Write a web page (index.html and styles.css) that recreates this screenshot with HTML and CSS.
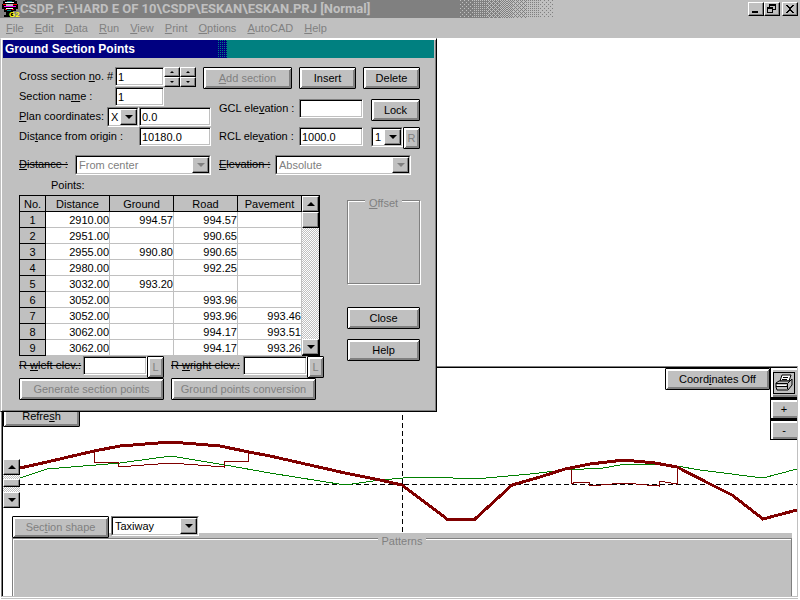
FILE: index.html
```html
<!DOCTYPE html>
<html lang="en">
<head>
    <meta charset="UTF-8">
    <meta name="viewport" content="width=device-width, initial-scale=1.0">
    <title>CSDP - Ground Section Points</title>
    <link rel="stylesheet" href="styles.css">
</head>
<body>

<!-- Title bar -->
<header class="titlebar">
    <svg class="app-icon" width="20" height="18" viewBox="0 0 20 18" shape-rendering="crispEdges" aria-hidden="true">
        <path d="M5 0h10v1h2v3h1v5h-2v2h-3v5h-3v1H4v-2h2v-3H4V9H2V4h1V1h2z" fill="#000"/>
        <path d="M5 2h9v1H5z" fill="#fff"/>
        <path d="M7 1h5v1H7z" fill="#008080"/>
        <path d="M3 4h3v1H3zM13 4h4v1h-4z" fill="#f00"/>
        <path d="M6 4h7v2H6z" fill="#c0c0c0"/>
        <path d="M4 6h12v1H4z" fill="#f0f"/>
        <path d="M6 8h7v1H6z" fill="#fff"/>
        <path d="M5 9h2v1H5zM12 9h2v1h-2z" fill="#f00"/>
        <path d="M7 10h4v1H7z" fill="#008080"/>
        <text x="9" y="17" class="icon-text">G2</text>
    </svg>
    <h1>CSDP, F:\HARD E OF 10\CSDP\ESKAN\ESKAN.PRJ [Normal]</h1>
    <!-- Dithered fade from dark to light gray -->
    <svg class="fade" width="93" height="18" viewBox="0 0 93 18" shape-rendering="crispEdges" aria-hidden="true">
        <defs>
            <pattern id="sparse" width="4" height="4" patternUnits="userSpaceOnUse"><path d="M0 0h1v1H0zM2 2h1v1H2z"/></pattern>
            <pattern id="quarter" width="2" height="2" patternUnits="userSpaceOnUse"><path d="M0 0h1v1H0z"/></pattern>
            <pattern id="third" width="4" height="4" patternUnits="userSpaceOnUse"><path d="M0 0h1v1H0zM2 0h1v1H2zM0 2h1v1H0zM2 2h1v1H2zM1 1h1v1H1zM3 3h1v1H3z"/></pattern>
            <pattern id="half" width="2" height="2" patternUnits="userSpaceOnUse"><path d="M0 0h1v1H0zM1 1h1v1H1z"/></pattern>
        </defs>
        <rect class="dark" width="47" height="18"/>
        <rect width="14" height="18" fill="url(#sparse)"/>
        <rect x="14" width="13" height="18" fill="url(#quarter)"/>
        <rect x="27" width="13" height="18" fill="url(#third)"/>
        <rect x="40" width="7" height="18" fill="url(#half)"/>
        <rect x="47" width="6" height="18" fill="url(#half-dark)"/>
        <rect x="53" width="13" height="18" fill="url(#third-dark)"/>
        <rect x="66" width="13" height="18" fill="url(#quarter-dark)"/>
        <rect x="79" width="14" height="18" fill="url(#sparse-dark)"/>
        <defs class="dark">
            <pattern id="sparse-dark" width="4" height="4" patternUnits="userSpaceOnUse"><path d="M0 0h1v1H0zM2 2h1v1H2z"/></pattern>
            <pattern id="quarter-dark" width="2" height="2" patternUnits="userSpaceOnUse"><path d="M0 0h1v1H0z"/></pattern>
            <pattern id="third-dark" width="4" height="4" patternUnits="userSpaceOnUse"><path d="M0 0h1v1H0zM2 0h1v1H2zM0 2h1v1H0zM2 2h1v1H2zM1 1h1v1H1zM3 3h1v1H3z"/></pattern>
            <pattern id="half-dark" width="2" height="2" patternUnits="userSpaceOnUse"><path d="M0 0h1v1H0zM1 1h1v1H1z"/></pattern>
        </defs>
    </svg>
    <div class="window-buttons">
        <button class="win-btn" aria-label="Minimize"><svg width="14" height="12" viewBox="0 0 14 12"><path d="M3 8h6v2H3z"/></svg></button>
        <button class="win-btn" aria-label="Restore"><svg width="14" height="12" viewBox="0 0 14 12" shape-rendering="crispEdges"><path d="M4 1h7v6H8V6h2V3H5v1H4zM2 4h6v6H2zM3 6v3h4V6z" fill-rule="evenodd"/></svg></button>
        <button class="win-btn close" aria-label="Close"><svg width="14" height="12" viewBox="0 0 14 12" shape-rendering="crispEdges"><path d="M3 2h2v1h1v1h2V3h1V2h2v1h-1v1H9v1H8v2h1v1h1v1h1v1H9V9H8V8H6v1H5v1H3V9h1V8h1V7h1V5H5V4H4V3H3z"/></svg></button>
    </div>
</header>

<!-- Menu -->
<nav class="menubar">
    <a href="#"><u>F</u>ile</a>
    <a href="#"><u>E</u>dit</a>
    <a href="#"><u>D</u>ata</a>
    <a href="#"><u>R</u>un</a>
    <a href="#"><u>V</u>iew</a>
    <a href="#"><u>P</u>rint</a>
    <a href="#"><u>O</u>ptions</a>
    <a href="#"><u>A</u>utoCAD</a>
    <a href="#"><u>H</u>elp</a>
</nav>

<main class="workspace">

    <!-- Section drawing window -->
    <section class="section-view">
        <svg class="drawing" viewBox="3 368 794 228" preserveAspectRatio="none" shape-rendering="crispEdges" aria-hidden="true">
            <path class="axis" d="M20 484.500H797M402.500 415V532"/>
            <polyline class="ground" points="20,478 47,469 120,463 171,456 225,465 270,473 345,485 380,480 415,477 430,477 475,479 530,474 565,470 603,468 620,465 660,464 677,466 700,470 763,478 797,469"/>
            <polyline class="pavement" points="94,451 94,462 118,462 118,467 171,463 224,467 224,461 248,461 248,451"/>
            <polyline class="pavement" points="571,468 571,484 576,482 589,482 589,486 624,483 659,486 659,481 677,484 677,467"/>
            <polyline class="road" points="20,468 47,462 94,451 120,446 171,442 220,446 249,452 270,456 345,473 380,480 402,485 447,519 475,519 512,485 540,477 565,469 590,464 624,460 655,463 677,467 710,484 732,495 763,519 797,510"/>
        </svg>
        <div class="view-top">
            <button class="btn refresh">Refre<u>s</u>h</button>
            <button class="btn coords">Coord<u>i</u>nates Off</button>
            <div class="tools">
                <button class="tool print" aria-label="Print">
                    <svg width="20" height="20" viewBox="0 0 20 20" aria-hidden="true">
                        <path d="M6 8L8 2h9l-2 6z" fill="#fff" stroke="#000"/>
                        <path d="M9 4.500h5M8 6.500h5" stroke="#000"/>
                        <path d="M2 10l3-2h11l2-2v6l-4 5H3l-1-3z" fill="#c0c0c0" stroke="#000"/>
                        <path d="M2 10.500h11.500V16M13.500 10.500L18 6M2 13.500h11" fill="none" stroke="#000"/>
                        <path d="M3 12.500h9" stroke="#fff"/>
                    </svg>
                </button>
                <button class="tool">+</button>
                <button class="tool">-</button>
            </div>
        </div>
        <div class="scrollbar view-scroll">
            <button class="scroll-btn up" aria-label="Scroll up"></button>
            <div class="track"><div class="thumb"></div></div>
            <button class="scroll-btn down" aria-label="Scroll down"></button>
        </div>
        <div class="shape-row">
            <button class="btn" disabled>Sec<u>t</u>ion shape</button>
            <span class="select"><select aria-label="Section shape"><option>Taxiway</option></select></span>
        </div>
        <div class="patterns-panel">
            <fieldset class="group patterns" disabled><legend>Patterns</legend></fieldset>
        </div>
    </section>

    <!-- Ground Section Points dialog -->
    <form class="dialog" onsubmit="return false">
        <h2>Ground Section Points</h2>
        <div class="dialog-body">
            <div class="row cross-row">
                <label class="wide" for="cross-no">Cross section <u>n</u>o. #</label>
                <input class="small" id="cross-no" type="text" value="1">
                <div class="spinner"><button aria-label="Next" class="up"></button><button aria-label="Previous" class="down"></button></div>
                <div class="spinner"><button aria-label="Next section" class="up"></button><button aria-label="Previous section" class="down"></button></div>
                <div class="actions">
                    <button class="btn add" disabled><u>A</u>dd section</button>
                    <button class="btn">Insert</button>
                    <button class="btn">Delete</button>
                </div>
            </div>

            <div class="fields">
                <div class="fields-left">
                    <div class="row">
                        <label class="wide" for="name">Section na<u>m</u>e :</label>
                        <input class="small" id="name" type="text" value="1">
                    </div>
                    <div class="row">
                        <label class="plan" for="plan"><u>P</u>lan coordinates:</label>
                        <span class="select axis-select"><select aria-label="Axis"><option>X</option><option>Y</option></select></span>
                        <input class="medium" id="plan" type="text" value="0.0">
                    </div>
                    <div class="row">
                        <label class="origin" for="origin">Dis<u>t</u>ance from origin :</label>
                        <input class="medium" id="origin" type="text" value="10180.0">
                    </div>
                </div>
                <div class="fields-right">
                    <div class="row">
                        <label class="elev" for="gcl">GCL ele<u>v</u>ation :</label>
                        <input class="value" id="gcl" type="text">
                        <button class="btn lock">Lock</button>
                    </div>
                    <div class="row">
                        <label class="elev" for="rcl">RCL ele<u>v</u>ation :</label>
                        <input class="value" id="rcl" type="text" value="1000.0">
                        <span class="select num-select"><select aria-label="RCL number"><option>1</option></select></span>
                        <button class="btn mini" disabled>R</button>
                    </div>
                </div>
            </div>

            <div class="row">
                <label class="mode" for="distance"><s><u>D</u>istance :</s></label>
                <span class="select mode-select"><select id="distance" disabled><option>From center</option></select></span>
                <label class="mode" for="elevation"><s><u>E</u>levation :</s></label>
                <span class="select mode-select"><select id="elevation" disabled><option>Absolute</option></select></span>
            </div>

            <div class="points-label">Points:</div>
            <div class="points-area">
                <table class="points">
                    <thead>
                        <tr><th class="no">No.</th><th>Distance</th><th>Ground</th><th>Road</th><th>Pavement</th></tr>
                    </thead>
                    <tbody>
                        <tr><th>1</th><td>2910.00</td><td>994.57</td><td>994.57</td><td></td></tr>
                        <tr><th>2</th><td>2951.00</td><td></td><td>990.65</td><td></td></tr>
                        <tr><th>3</th><td>2955.00</td><td>990.80</td><td>990.65</td><td></td></tr>
                        <tr><th>4</th><td>2980.00</td><td></td><td>992.25</td><td></td></tr>
                        <tr><th>5</th><td>3032.00</td><td>993.20</td><td></td><td></td></tr>
                        <tr><th>6</th><td>3052.00</td><td></td><td>993.96</td><td></td></tr>
                        <tr><th>7</th><td>3052.00</td><td></td><td>993.96</td><td>993.46</td></tr>
                        <tr><th>8</th><td>3062.00</td><td></td><td>994.17</td><td>993.51</td></tr>
                        <tr><th>9</th><td>3062.00</td><td></td><td>994.17</td><td>993.26</td></tr>
                    </tbody>
                </table>
                <div class="scrollbar">
                    <button class="scroll-btn up" aria-label="Scroll up"></button>
                    <div class="track"><div class="thumb"></div></div>
                    <button class="scroll-btn down" aria-label="Scroll down"></button>
                </div>
                <div class="side">
                    <fieldset class="group offset" disabled><legend><u>O</u>ffset</legend></fieldset>
                    <button class="btn">Close</button>
                    <button class="btn">Help</button>
                </div>
            </div>

            <div class="row">
                <label class="left-wall" for="wleft"><s>R <u>w</u>left elev.:</s></label>
                <input class="value" id="wleft" type="text">
                <button class="btn mini" disabled>L</button>
                <label class="right-wall" for="wright"><s>R <u>w</u>right elev.:</s></label>
                <input class="value" id="wright" type="text">
                <button class="btn mini" disabled>L</button>
            </div>
            <div class="row bottom">
                <button class="btn" disabled>Generate section points</button>
                <button class="btn" disabled>Ground points conversion</button>
            </div>
        </div>
    </form>
</main>

</body>
</html>
```

FILE: styles.css
```css
/* Global */
* {
    box-sizing: border-box;
}

body {
    margin: 0;
    display: flex;
    flex-direction: column;
    min-height: 100vh;
    background-color: #ffffff;
    color: #000000;
    font-family: 'Liberation Sans', Arial, sans-serif;
    font-size: 11px;
    line-height: 16px;
}

button, input, select {
    margin: 0;
    font: inherit;
    color: inherit;
    border-radius: 0;
}

/* Title bar */
.titlebar {
    display: flex;
    align-items: center;
    height: 18px;
    background-color: #c0c0c0;
}

.app-icon {
    flex: none;
    background-color: #808080;
}

.icon-text {
    font: bold 8px 'Liberation Sans', sans-serif;
    fill: #ffff00;
}

.titlebar h1 {
    flex: none;
    margin: 0;
    width: 440px;
    font-family: Roboto, 'Liberation Sans', sans-serif;
    font-size: 13px;
    line-height: 18px;
    white-space: nowrap;
    color: #c0c0c0;
    background-color: #808080;
}

.fade {
    flex: none;
}

.fade .dark {
    fill: #808080;
}

.fade pattern {
    fill: #c0c0c0;
}

.fade .dark pattern {
    fill: #808080;
}

.window-buttons {
    display: flex;
    margin-left: auto;
    padding-right: 2px;
}

.win-btn {
    display: flex;
    width: 16px;
    height: 14px;
    padding: 0;
    border: 1px solid;
    border-color: #ffffff #000000 #000000 #ffffff;
    background-color: #c0c0c0;
    box-shadow: inset -1px -1px #808080;
}

.win-btn.close {
    margin-left: 2px;
}

/* Menu */
.menubar {
    display: flex;
    gap: 11px;
    height: 20px;
    padding: 2px 6px;
    background-color: #c0c0c0;
}

.menubar a {
    color: #808080;
    text-decoration: none;
}

.workspace {
    position: relative;
    flex: 1;
    display: flex;
    flex-direction: column;
    justify-content: flex-end;
}

/* Buttons */
.btn {
    height: 22px;
    padding: 0 4px;
    border: 1px solid #000000;
    border-radius: 1px;
    background-color: #c0c0c0;
    box-shadow: inset 1px 1px #ffffff, inset -1px -1px #808080, inset 2px 2px #ffffff, inset -2px -2px #808080;
    white-space: nowrap;
}

.btn:disabled {
    color: #808080;
}

.btn.mini {
    width: 17px;
    padding: 0;
}

/* Text boxes */
input {
    height: 19px;
    padding: 0 2px;
    border: 1px solid;
    border-color: #808080 #ffffff #ffffff #808080;
    background-color: #ffffff;
    box-shadow: inset 1px 1px #000000, inset -1px -1px #c0c0c0;
}

/* Drop-downs */
.select {
    position: relative;
    display: inline-flex;
    height: 20px;
    border: 1px solid;
    border-color: #808080 #ffffff #ffffff #808080;
    background-color: #ffffff;
}

.select select {
    width: 100%;
    padding: 0 16px 0 2px;
    border: 1px solid;
    border-color: #000000 #c0c0c0 #c0c0c0 #000000;
    appearance: none;
    background-color: #ffffff;
    opacity: 1;
}

.select select:disabled {
    color: #808080;
}

.select::before {
    content: '';
    position: absolute;
    top: 1px;
    right: 1px;
    bottom: 1px;
    width: 15px;
    border: 1px solid;
    border-color: #ffffff #000000 #000000 #ffffff;
    box-shadow: inset -1px -1px #808080;
    background-color: #c0c0c0;
    pointer-events: none;
}

.select::after {
    content: '';
    position: absolute;
    top: 7px;
    right: 5px;
    border: 4px solid transparent;
    border-top-color: #000000;
    border-bottom: 0;
    pointer-events: none;
}

.select:has(select:disabled)::after {
    border-top-color: #808080;
}

/* Scroll bars */
.scrollbar {
    display: flex;
    flex-direction: column;
    width: 18px;
}

.scroll-btn, .thumb {
    flex: none;
    width: 100%;
    height: 16px;
    padding: 0;
    border: 1px solid;
    border-color: #ffffff #000000 #000000 #ffffff;
    background-color: #c0c0c0;
    box-shadow: inset -1px -1px #808080;
}

.scroll-btn::before, .spinner button::before {
    content: '';
    display: block;
    width: 0;
    margin: 0 auto;
    border: 4px solid transparent;
}

.scroll-btn.up::before, .spinner .up::before {
    border-top: 0;
    border-bottom-color: #000000;
}

.scroll-btn.down::before, .spinner .down::before {
    border-bottom: 0;
    border-top-color: #000000;
}

.track {
    flex: 1;
    background-image: conic-gradient(#c0c0c0 25%, #ffffff 0 50%, #c0c0c0 0 75%, #ffffff 0);
    background-size: 2px 2px;
}

/* Group boxes */
.group {
    margin: 0;
    padding: 0;
    border: 1px solid #808080;
    box-shadow: 1px 1px #ffffff, inset 1px 1px #ffffff;
    color: #808080;
    text-align: center;
}

/* The caption hangs below the frame line */
.group legend {
    height: 3px;
    margin: 0 auto;
    padding: 0 4px;
    line-height: 9px;
    background-color: #c0c0c0;
}

/* Section drawing window */
.section-view {
    position: relative;
    display: flex;
    flex-direction: column;
    margin: 0 2px 3px 1px;
    border: 1px solid #808080;
    border-right-color: #c0c0c0;
    border-bottom-color: #c0c0c0;
    box-shadow: inset 1px 1px #000000, 0 1px #ffffff, 0 2px #c0c0c0;
    padding: 1px 0 0 1px;
}

.drawing {
    position: absolute;
    top: 1px;
    left: 1px;
    width: calc(100% - 1px);
    height: calc(100% - 1px);
}

.drawing path, .drawing polyline {
    fill: none;
}

.drawing .axis {
    stroke: #000000;
    stroke-dasharray: 5 3;
}

.drawing .ground {
    stroke: #008000;
}

.drawing .pavement {
    stroke: #800000;
}

.drawing .road {
    stroke: #800000;
    stroke-width: 3;
}

.view-top {
    position: relative;
    display: flex;
    height: 72px;
}

.refresh {
    width: 77px;
    margin-top: 37px;
}

.coords {
    width: 105px;
    margin-left: auto;
}

.tools {
    display: flex;
    flex-direction: column;
    width: 27px;
}

.tool {
    height: 21px;
    padding: 0;
    border: 1px solid #000000;
    border-width: 2px 0 1px 1px;
    background-color: #c0c0c0;
    box-shadow: inset 2px 2px #ffffff, inset 0 -2px #808080;
}

.tool.print {
    display: flex;
    align-items: center;
    justify-content: center;
    height: 30px;
    border-top-width: 0;
}

.print svg {
    outline: 1px solid #000000;
}

.view-scroll {
    position: relative;
    width: 17px;
    height: 49px;
    margin: 19px 0 8px;
}

.view-scroll .thumb {
    height: 8px;
    margin-top: 4px;
}

.shape-row {
    position: relative;
    display: flex;
    gap: 2px;
    margin-left: 9px;
    z-index: 1;
}

.shape-row .btn {
    width: 97px;
}

.shape-row .select {
    width: 88px;
}

.patterns-panel {
    position: relative;
    margin: -5px 5px 0 9px;
    padding-top: 4px;
    background-color: #c0c0c0;
}

.patterns {
    height: 59px;
    border-bottom: 0;
    box-shadow: inset 1px 1px #ffffff;
}

/* Dialog over the main window */
.dialog {
    position: absolute;
    top: 0;
    left: 0;
    padding: 1px;
    border: 1px solid;
    border-color: #ffffff #000000 #000000 #c0c0c0;
    box-shadow: inset 1px 1px #ffffff, inset -1px -1px #808080;
    background-color: #c0c0c0;
}

.dialog h2 {
    margin: 0 1px;
    padding-left: 2px;
    font-size: 12px;
    line-height: 18px;
    color: #ffffff;
    background-image:
        linear-gradient(to right, #000080 214px, transparent 214px 224px, #008080 224px),
        conic-gradient(#008080 25%, #000080 0);
    background-size: auto, 2px 2px;
}

.dialog-body {
    padding: 9px 15px 10px 17px;
}

.row {
    display: flex;
    align-items: flex-start;
}

.row label {
    flex: none;
    padding-top: 1px;
    white-space: nowrap;
}

.cross-row {
    height: 20px;
}

.wide {
    width: 96px;
}

.plan {
    width: 88px;
}

.origin {
    width: 120px;
}

.elev {
    width: 80px;
}

.small {
    width: 49px;
}

.medium {
    width: 72px;
}

.value {
    width: 64px;
}

.spinner {
    display: flex;
    flex-direction: column;
    width: 16px;
}

.spinner button {
    height: 10px;
    padding: 0;
    border: 1px solid;
    border-color: #ffffff #000000 #000000 #ffffff;
    background-color: #c0c0c0;
    box-shadow: inset -1px -1px #808080;
}

.spinner button::before {
    border-width: 2px;
}

.actions {
    display: flex;
    gap: 7px;
    margin-left: 7px;
}

.actions .btn {
    width: 57px;
}

.actions .add {
    width: 89px;
}

.fields {
    display: flex;
    gap: 8px;
}

.fields-left {
    width: 192px;
}

.fields-left .row {
    height: 20px;
}

.fields-right {
    padding-top: 12px;
}

.fields-right .row {
    height: 28px;
}

.axis-select, .num-select {
    width: 32px;
}

.num-select {
    margin-left: 8px;
}

.lock {
    width: 49px;
    margin-left: 8px;
}

.mode {
    width: 56px;
}

.mode-select {
    width: 136px;
    margin-right: 8px;
}

.points-label {
    padding: 2px 32px;
}

.points-area {
    display: flex;
    align-items: flex-start;
}

.points {
    width: 283px;
    table-layout: fixed;
    border-collapse: collapse;
    border: 1px solid #000000;
    background-color: #ffffff;
}

.points th {
    height: 16px;
    padding: 0;
    border: 1px solid #000000;
    font-weight: normal;
    line-height: 14px;
    background-color: #c0c0c0;
}

.points td {
    height: 16px;
    padding: 0;
    border: 1px solid #c0c0c0;
    line-height: 14px;
    text-align: right;
}

.points .no {
    width: 26px;
}

.points-area .scrollbar {
    align-self: stretch;
    border: 1px solid #000000;
    border-left: 0;
}

/* Runs a little below the table, beside the next row */
.side {
    display: flex;
    flex-direction: column;
    gap: 10px;
    width: 73px;
    margin: 0 0 -6px 27px;
}

.offset {
    height: 85px;
    margin: 4px 0 13px;
}

.left-wall {
    width: 64px;
}

.right-wall {
    width: 72px;
    margin-left: 7px;
}

.bottom {
    gap: 7px;
}

.bottom .btn {
    width: 145px;
}
```
